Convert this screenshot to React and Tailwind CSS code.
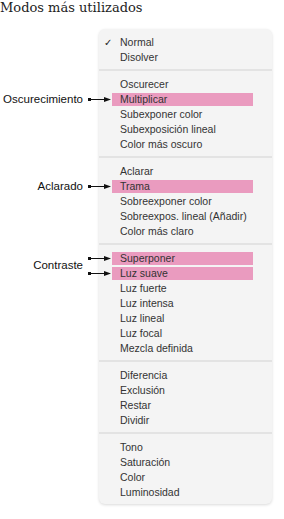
import React from 'react';

const groups = [
  [{ t: 'Normal', check: true }, { t: 'Disolver' }],
  [
    { t: 'Oscurecer' },
    { t: 'Multiplicar', hl: true, arrow: true, label: 'Oscurecimiento' },
    { t: 'Subexponer color' },
    { t: 'Subexposición lineal' },
    { t: 'Color más oscuro' },
  ],
  [
    { t: 'Aclarar' },
    { t: 'Trama', hl: true, arrow: true, label: 'Aclarado' },
    { t: 'Sobreexponer color' },
    { t: 'Sobreexpos. lineal (Añadir)' },
    { t: 'Color más claro' },
  ],
  [
    { t: 'Superponer', hl: true, arrow: true, label: 'Contraste', labelShift: true },
    { t: 'Luz suave', hl: true, arrow: true },
    { t: 'Luz fuerte' },
    { t: 'Luz intensa' },
    { t: 'Luz lineal' },
    { t: 'Luz focal' },
    { t: 'Mezcla definida' },
  ],
  [{ t: 'Diferencia' }, { t: 'Exclusión' }, { t: 'Restar' }, { t: 'Dividir' }],
  [{ t: 'Tono' }, { t: 'Saturación' }, { t: 'Color' }, { t: 'Luminosidad' }],
];

// annotation arrow pointing into the menu
function Arrow() {
  return (
    <svg className="absolute left-[-11px] top-[3px]" width="24" height="9" viewBox="0 0 24 9">
      <rect x="0" y="3" width="3" height="3" fill="#111" />
      <line x1="2" y1="4.5" x2="19" y2="4.5" stroke="#111" strokeWidth="1" />
      <path d="M16 2 L23 4.5 L16 7 Z" fill="#111" />
    </svg>
  );
}

function Row({ item }) {
  return (
    <div className="relative h-[15px] flex items-center">
      <span className="w-[13px] pl-[5px] text-[10px] leading-none text-[#222]">{item.check ? '✓' : ''}</span>
      <span
        className={
          'w-[141px] h-[13px] pl-[8px] flex items-center whitespace-nowrap text-[10.5px] text-[#333] ' +
          (item.hl ? 'bg-[#ea9bbf]' : '')
        }
      >
        {item.t}
      </span>
      {item.arrow && <Arrow />}
      {item.label && (
        <span
          className={
            'absolute right-[189px] whitespace-nowrap text-[11.5px] leading-[15px] text-[#111] ' +
            (item.labelShift ? 'top-[7px]' : 'top-0')
          }
        >
          {item.label}
        </span>
      )}
    </div>
  );
}

export default function App() {
  return (
    <div className="w-[284px] h-[519px] bg-white" style={{ fontFamily: '"Liberation Sans", Arial, sans-serif' }}>
      <h1 className="text-[13px] leading-[15px] text-[#222]" style={{ fontFamily: '"DejaVu Serif", serif' }}>
        Modos más utilizados
      </h1>
      <div className="ml-[99px] mt-[14px] w-[173px] bg-[#f4f4f4] rounded-[6px] shadow-[0_1px_3px_rgba(0,0,0,0.15)]">
        {groups.map((g, i) => (
          <div key={i}>
            {i > 0 && <div className="h-[2px] bg-[#e3e3e3]" />}
            <div className="pt-[6px] pb-[4px]">
              {g.map((item) => (
                <Row key={item.t} item={item} />
              ))}
            </div>
          </div>
        ))}
      </div>
    </div>
  );
}
